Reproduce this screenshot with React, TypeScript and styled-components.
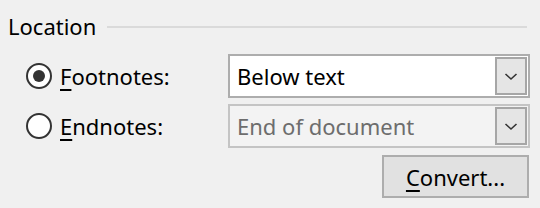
import styled, { createGlobalStyle } from 'styled-components';

const Global = createGlobalStyle`
  html, body {
    margin: 0;
    background: #f0f0f0;
  }
  body {
    font-family: 'Noto Sans', 'Open Sans', sans-serif;
    font-size: 22px;
    color: #000;
  }
`;

const Panel = styled.div`
  width: 540px;
  height: 208px;
  box-sizing: border-box;
  padding: 11px 10px 0 8px;
  display: flex;
  flex-direction: column;
`;

const GroupHeader = styled.div`
  display: flex;
  align-items: center;
  gap: 11px;
  height: 31px;
`;

const GroupTitle = styled.span`
  line-height: 31px;
`;

const Rule = styled.div`
  flex: 1;
  height: 2px;
  background: #dadada;
  margin-right: 3px;
`;

const Rows = styled.div`
  display: grid;
  grid-template-columns: 220px 302px;
  grid-auto-rows: 44px;
  row-gap: 6px;
  margin-top: 12px;
`;

const RadioLabel = styled.label`
  display: flex;
  align-items: center;
  gap: 8px;
  padding-left: 18px;
`;

const Ring = styled.span<{ $checked?: boolean }>`
  width: 26px;
  height: 26px;
  box-sizing: border-box;
  border-radius: 50%;
  border: 2px solid #333;
  background: #fff;
  display: flex;
  align-items: center;
  justify-content: center;
  &::after {
    content: '';
    width: 12px;
    height: 12px;
    border-radius: 50%;
    background: ${(p) => (p.$checked ? '#333' : 'transparent')};
  }
`;

const Key = styled.span`
  text-decoration: underline;
  text-underline-offset: 4px;
  text-decoration-thickness: 2px;
`;

const Combo = styled.div<{ $disabled?: boolean }>`
  display: flex;
  box-sizing: border-box;
  border: 2px solid ${(p) => (p.$disabled ? '#c4c4c4' : '#adadad')};
  background: ${(p) => (p.$disabled ? '#f3f3f3' : '#fff')};
  color: ${(p) => (p.$disabled ? '#6d6d6d' : '#000')};
`;

const ComboText = styled.span`
  flex: 1;
  padding-left: 7px;
  display: flex;
  align-items: center;
`;

const Arrow = styled.span`
  width: 32px;
  box-sizing: border-box;
  margin: 1px;
  border: 2px solid #a6a6a6;
  background: #e5e5e5;
  display: flex;
  align-items: center;
  justify-content: center;
`;

const Footer = styled.div`
  display: flex;
  justify-content: flex-end;
  margin-top: 7px;
  padding-right: 1px;
`;

const Button = styled.button`
  width: 147px;
  height: 43px;
  box-sizing: border-box;
  border: 2px solid #adadad;
  background: #e1e1e1;
  font: inherit;
  color: #000;
  padding: 0;
`;

const Chevron = () => (
  <svg width="14" height="9" viewBox="0 0 14 9">
    <path d="M1.5 2 L7 7 L12.5 2" fill="none" stroke="#333" strokeWidth="1.6" />
  </svg>
);

export default function App() {
  return (
    <>
      <Global />
      <Panel>
        <GroupHeader>
          <GroupTitle>Location</GroupTitle>
          <Rule />
        </GroupHeader>
        <Rows>
          <RadioLabel>
            <Ring $checked />
            <span>
              <Key>F</Key>ootnotes:
            </span>
          </RadioLabel>
          <Combo>
            <ComboText>Below text</ComboText>
            <Arrow>
              <Chevron />
            </Arrow>
          </Combo>
          <RadioLabel>
            <Ring />
            <span>
              <Key>E</Key>ndnotes:
            </span>
          </RadioLabel>
          <Combo $disabled>
            <ComboText>End of document</ComboText>
            <Arrow>
              <Chevron />
            </Arrow>
          </Combo>
        </Rows>
        <Footer>
          <Button>
            <Key>C</Key>onvert...
          </Button>
        </Footer>
      </Panel>
    </>
  );
}
